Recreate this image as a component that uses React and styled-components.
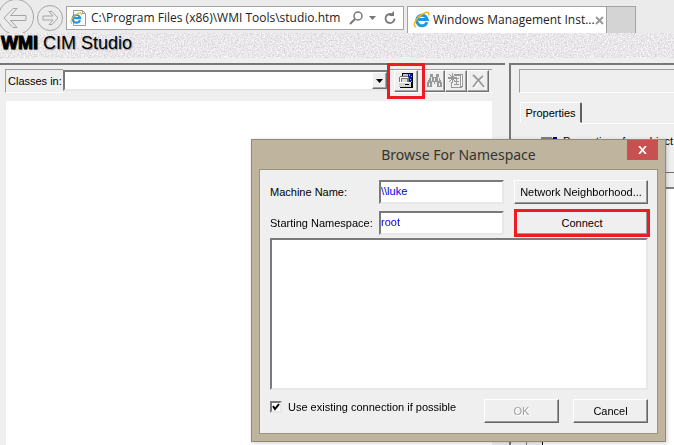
import React from "react";
import styled, { createGlobalStyle, css } from "styled-components";

const Global = createGlobalStyle`
  *, *::before, *::after { box-sizing: border-box; }
  html, body { margin: 0; height: 100%; overflow: hidden; }
  body { background: #efefef; color: #000; font: 11px/14px "Liberation Sans", Arial, sans-serif; }
  button, input { font: inherit; margin: 0; padding: 0; }
  svg { flex: none; }
`;

const sunken = css`
  border: 1px solid;
  border-color: #9d9d9d #fff #fff #9d9d9d;
`;
const field = css`
  background: #fff;
  border: 2px solid;
  border-color: #7a7a7a #e8e8e8 #e8e8e8 #7a7a7a;
  border-radius: 0;
`;

const Page = styled.div`
  position: relative;
  height: 100vh;
  display: flex;
  flex-direction: column;
  overflow: hidden;
`;

const BrowserBar = styled.header`
  display: flex;
  align-items: flex-end;
  height: 33px;
  background: #ebebeb;
  font: 12px/16px "Open Sans", "Noto Sans", sans-serif;
  color: #222;
`;
const NavButtons = styled.nav`
  display: flex;
  align-items: center;
  width: 66px;
  height: 33px;
  overflow: hidden;
`;
const PlainButton = styled.button`
  display: flex;
  flex: none;
  border: 0;
  background: none;
`;
const Address = styled.form`
  display: flex;
  align-items: center;
  width: 338px;
  height: 24px;
  margin-bottom: 3px;
  padding: 0 6px 0 3px;
  gap: 2px;
  background: #fff;
  border: 1px solid #a3a3a3;
`;
const AddressInput = styled.input`
  flex: 1;
  min-width: 0;
  border: 0;
  outline: 0;
  background: none;
  color: #222;
  padding-left: 2px;
`;
const Tab = styled.div`
  display: flex;
  align-items: center;
  width: 200px;
  height: 27px;
  margin-left: 3px;
  padding: 0 5px;
  background: #fff;
  border: 1px solid #a3a3a3;
  border-bottom: 0;
`;
const TabTitle = styled.span`
  flex: 1;
  padding-left: 2px;
  white-space: nowrap;
`;
const NewTab = styled.button`
  width: 29px;
  height: 27px;
  background: #d4d4d4;
  border: 1px solid #a3a3a3;
  border-width: 1px 1px 0 0;
`;

const Banner = styled.div`
  display: grid;
  flex: none;
  height: 25px;
  background: #eae8ea;
  overflow: hidden;
  > * { grid-area: 1 / 1; }
`;
const Title = styled.h1`
  margin: 0;
  padding-left: 1px;
  font: 18px/21px "Liberation Sans", Arial, sans-serif;
  text-shadow: 1px 1px 1px #999;
  b { -webkit-text-stroke: 1px #000; }
`;

const Panes = styled.main`
  display: grid;
  grid-template-columns: 505px 1fr;
  gap: 4px;
  flex: 1;
  min-height: 0;
  padding-top: 5px;
`;
const LeftPane = styled.section`
  display: flex;
  flex-direction: column;
  border-top: 2px solid #777;
  padding: 4px 13px 0 6px;
`;
const Toolbar = styled.div`
  display: flex;
  height: 24px;
  margin-left: -1px;
`;
const ClassesLabel = styled.label`
  ${sunken}
  border-right: 0;
  flex: none;
  width: 58px;
  padding-left: 2px;
  line-height: 22px;
  white-space: nowrap;
`;
const Combo = styled.div`
  ${field}
  display: flex;
  flex: none;
  width: 326px;
  height: 21px;
  margin-top: 1px;
`;
const ComboInput = styled.input`
  flex: 1;
  min-width: 0;
  border: 0;
  outline: 0;
`;
const raised = css`
  background: #efefef;
  border: 1px solid;
  border-color: #fff #707070 #707070 #fff;
  box-shadow: inset -1px -1px #a8a8a8;
`;
const ComboButton = styled.button`
  ${raised}
  display: grid;
  place-items: center;
  width: 15px;
`;
const Tools = styled.div`
  ${sunken}
  flex: 1;
  display: flex;
  padding-left: 5px;
  border-left: 0;
  border-right: 0;
`;
const ToolButton = styled.button`
  ${raised}
  display: grid;
  flex: none;
  place-items: center;
  width: ${(p) => (p.$marked ? 24 : 22)}px;
  height: 22px;
  margin-right: ${(p) => (p.$marked ? 5 : 0)}px;
  outline: ${(p) => (p.$marked ? "3px solid #ed1c24" : "none")};
  outline-offset: 4px;
  z-index: ${(p) => (p.$marked ? 1 : 0)};
`;
const ClassTree = styled.div`
  flex: 1;
  margin-top: 8px;
  background: #fff;
`;

const RightPane = styled.section`
  border: solid #777;
  border-width: 2px 0 0 2px;
  display: flex;
  flex-direction: column;
  min-width: 0;
`;
const PathBox = styled.div`
  ${sunken}
  border-right: 0;
  height: 24px;
  margin: 4px 0 0 8px;
`;
const PropTabs = styled.div`
  display: flex;
  margin: 9px 0 0 9px;
`;
const PropTab = styled.button`
  width: 62px;
  height: 21px;
  background: #efefef;
  border: 1px solid;
  border-color: #fff #606060 transparent #fff;
  border-right-width: 2px;
  border-radius: 2px 2px 0 0;
`;
const PropPanel = styled.div`
  margin-left: 9px;
  height: 50px;
  padding: 11px 0 0 19px;
  border-bottom: 1px solid #707070;
  display: flex;
  gap: 4px;
  align-items: flex-start;
  white-space: nowrap;
  position: relative;
  &::before {
    content: "";
    position: absolute;
    inset: 0 0 auto 61px;
    border-top: 1px solid #fff;
  }
`;
const PropGrid = styled.div`
  flex: 1;
  margin: 14px 0 0 15px;
  background: #fff;
  border: solid #808080;
  border-width: 2px 0 0 1px;
`;
const RowMarkers = styled.div`
  width: 16px;
  height: 100%;
  background: #efefef;
  border-right: 1px solid #000;
`;

const Dialog = styled.section`
  position: absolute;
  left: 251px;
  top: 139px;
  width: 415px;
  padding: 0 7px 7px;
  background: #bfb59f;
  border: 1px solid #948a74;
  box-shadow: 1px 1px 4px #0003;
`;
const DialogHead = styled.header`
  display: grid;
  grid-template-columns: 31px 1fr 31px;
  height: 29px;
  font: 14px/30px "Noto Sans", "Open Sans", sans-serif;
  color: #333;
`;
const DialogTitle = styled.h2`
  grid-column: 2;
  margin: 0;
  font: inherit;
  text-align: center;
`;
const CloseButton = styled.button`
  display: grid;
  place-items: center;
  height: 20px;
  background: #c75050;
  border: 0;
`;
const DialogBody = styled.form`
  padding: 10px 9px 10px 10px;
  background: #efefef;
  border: 1px solid #9d937d;
`;
const FieldRow = styled.div`
  display: grid;
  grid-template-columns: 109px 125px 1fr;
  align-items: start;
  height: 31px;
  & + & { height: 27px; }
`;
const FieldLabel = styled.label`
  line-height: 24px;
`;
const TextInput = styled.input`
  ${field}
  width: 125px;
  height: 24px;
  padding: 0 0 3px 0;
  color: #0000e0;
  outline: 0;
`;
const PushButton = styled.button`
  background: #efefef;
  border: 1px solid;
  border-color: #fff #666 #666 #fff;
  box-shadow: inset -1px -1px #999;
  width: ${(p) => (p.$wide ? "auto" : "75px")};
  height: 24px;
  margin-left: ${(p) => (p.$marked ? 12 : p.$wide ? 10 : 0)}px;
  outline: ${(p) => (p.$marked ? "3px solid #ed1c24" : "none")};
  outline-offset: -1px;
  &:disabled { color: #a0a0a0; text-shadow: 1px 1px #fff; }
`;
const Results = styled.div`
  ${field}
  height: 152px;
  margin-bottom: 9px;
`;
const Footer = styled.div`
  display: flex;
  gap: 14px;
`;
const CheckLabel = styled.label`
  flex: 1;
  display: flex;
  align-items: center;
  gap: 6px;
  height: 16px;
`;
const CheckMark = styled.span`
  display: grid;
  > * { grid-area: 1 / 1; }
  svg { pointer-events: none; }
`;
const Check = styled.input`
  ${field}
  appearance: none;
  width: 12px;
  height: 12px;
  &:not(:checked) + svg { display: none; }
`;

const LogoShape = () => (
  <>
    <path d="M14 11.200A5.300 5.300 0 1 1 14.200 8.600H5.500" stroke="#2496dc" strokeWidth="3" />
    <path d="M3 16C-1 15 2.500 7.500 8 4c5-3.500 9-4 7.500.500" stroke="#f2b91d" strokeWidth="1.500" />
  </>
);
const IELogo = () => (
  <svg width="18" height="18" viewBox="0 0 18 18" fill="none" aria-hidden="true">
    <LogoShape />
  </svg>
);

export default function App() {
  return (
    <Page>
      <Global />
      <BrowserBar>
        <NavButtons>
          <PlainButton type="button" aria-label="Back">
            <svg width="35" height="34" viewBox="0 0 35 34" fill="none" stroke="#a5a5a5">
              <circle cx="16" cy="17" r="17.500" />
              <path d="M4 18 13 8.500h4L10.500 15.500H26v5H10.500L17 27.500h-4Z" />
            </svg>
          </PlainButton>
          <PlainButton type="button" aria-label="Forward">
            <svg width="31" height="34" viewBox="0 0 31 34" fill="none" stroke="#a5a5a5">
              <circle cx="15" cy="18" r="12.500" />
              <path d="M23 18 17 11.500h-3L18 16H8v4h10l-4 4.500h3Z" />
            </svg>
          </PlainButton>
        </NavButtons>
        <Address>
          <svg width="17" height="18" viewBox="0 0 17 18" fill="none" aria-hidden="true">
            <path d="M3.500 1.500h9l3 3v12h-12Z" stroke="#999" fill="#fff" />
            <path d="M12.500 1.500v3h3" stroke="#999" />
            <g transform="translate(0 3) scale(.72)">
              <LogoShape />
            </g>
          </svg>
          <AddressInput aria-label="Address" defaultValue="C:\Program Files (x86)\WMI Tools\studio.htm" />
          <PlainButton type="button" aria-label="Search">
            <svg width="28" height="16" viewBox="0 0 28 16" fill="none" stroke="#777" strokeWidth="1.500">
              <circle cx="9" cy="6" r="4" />
              <path d="m6 9-5 5" strokeWidth="2" />
              <path d="M20 6h7l-3.500 4Z" fill="#777" stroke="none" />
            </svg>
          </PlainButton>
          <PlainButton type="button" aria-label="Refresh">
            <svg width="18" height="16" viewBox="-4 0 18 16" fill="none" stroke="#777" strokeWidth="1.800">
              <path d="M11.500 8.500A4.500 4.500 0 1 1 9 4.500" />
              <path d="M11 1v5H6Z" fill="#777" stroke="none" />
            </svg>
          </PlainButton>
        </Address>
        <Tab>
          <IELogo />
          <TabTitle>Windows Management Inst...</TabTitle>
          <PlainButton type="button" aria-label="Close tab">
            <svg width="9" height="9" viewBox="0 0 9 9" stroke="#999" strokeWidth="2">
              <path d="m1 1 7 7M8 1 1 8" />
            </svg>
          </PlainButton>
        </Tab>
        <NewTab type="button" aria-label="New tab" />
      </BrowserBar>

      <Banner>
        <svg width="100%" height="25" aria-hidden="true">
          <filter id="grain" x="0" y="0" width="100%" height="100%" colorInterpolationFilters="sRGB">
            <feTurbulence type="fractalNoise" baseFrequency="0.7" numOctaves="2" seed="4" />
            <feColorMatrix values=".3 .06 0 0 .735  .3 .03 0 0 .74  .3 .06 0 0 .735  0 0 0 0 1" />
          </filter>
          <rect width="100%" height="25" filter="url(#grain)" />
        </svg>
        <Title><b>WMI</b> CIM Studio</Title>
      </Banner>

      <Panes>
        <LeftPane>
          <Toolbar>
            <ClassesLabel htmlFor="classes">Classes in:</ClassesLabel>
            <Combo>
              <ComboInput id="classes" />
              <ComboButton type="button" aria-label="Show namespaces">
                <svg width="7" height="4"><path d="M0 0h7L3.500 4Z" /></svg>
              </ComboButton>
            </Combo>
            <Tools>
              <ToolButton type="button" aria-label="Browse for namespace" $marked>
                <svg width="16" height="16" viewBox="0 0 16 16" shapeRendering="crispEdges">
                  <path d="M4 0h11v12H4z" fill="#000" />
                  <path d="M5 1h9v10H5z" fill="#c0c0c0" />
                  <path d="M10 1h4v8h-4z" fill="#0018c8" />
                  <path d="M11 1h1v2h-1zM10 4h1v1h-1zM13 3h1v1h-1zM12 6h1v1h-1zM13 8h1v1h-1z" fill="#5cf" />
                  <path d="M2 3h8v1h1v6H1V4h1z" fill="#777" />
                  <path d="M2 4h8v1H2zM2 5h1v4H2z" fill="#fff" />
                  <path d="M4 6h5v3H4z" fill="#dcdcdc" />
                  <path d="M1 9h13l1 1v5H2l-1-1z" fill="#000" />
                  <path d="M1 9h12v5H1z" fill="#d4d4d4" />
                  <path d="M1 9h12v1H1z" fill="#fff" />
                  <path d="M7 11h4v1H7z" fill="#000" />
                </svg>
              </ToolButton>
              <ToolButton type="button" aria-label="Search for class" disabled>
                <svg width="17" height="16" viewBox="0 0 17 16" fill="#999" shapeRendering="crispEdges">
                  <path d="M4 1h3v3h3V1h3v3l3 6v4h-5V9H9v2H8V9H6v5H1v-4l3-6Z" />
                  <path d="M3 10v3M5 4v4M13 10v3M12 4v4M8 5v3" stroke="#eee" />
                </svg>
              </ToolButton>
              <ToolButton type="button" aria-label="Add class" disabled>
                <svg width="16" height="16" viewBox="0 0 16 16" fill="#999" shapeRendering="crispEdges">
                  <path d="M6 1h9v12l-2 2H3V9h1v5h8V3H6z" />
                  <path d="M13 2h1v11h-1z" fill="#fff" />
                  <path d="M6 5h5v1H6zM6 8h5v1H6zM6 11h5v1H6zM8 5h1v7H8z" />
                  <path d="M4 0h1v10H4zM0 4h9v2H0zM1 1h1v1H1zM2 2h1v1H2zM3 3h1v1H3zM7 1h1v1H7zM6 2h1v1H6zM5 3h1v1H5zM3 6h1v1H3zM2 7h1v1H2zM1 8h1v1H1zM5 6h1v1H5zM6 7h1v1H6z" />
                </svg>
              </ToolButton>
              <ToolButton type="button" aria-label="Delete class" disabled>
                <svg width="15" height="15" viewBox="0 0 15 15" fill="none">
                  <path d="M3 2c4 3 7 7 11 12M13 3C9 6 6 9 3 14" stroke="#fff" strokeWidth="1.500" />
                  <path d="M2 1c4 3 7 7 11 12M12 2C8 5 5 8 2 13" stroke="#999" strokeWidth="1.800" />
                </svg>
              </ToolButton>
            </Tools>
          </Toolbar>
          <ClassTree />
        </LeftPane>
        <RightPane>
          <PathBox />
          <PropTabs>
            <PropTab type="button">Properties</PropTab>
          </PropTabs>
          <PropPanel>
            <svg width="20" height="14" viewBox="0 0 20 14" aria-hidden="true">
              <path d="M2 3h11v1h1v8H0V5h2z" fill="#808080" />
              <path d="M14 3h4v9h-4z" fill="#000080" />
            </svg>
            Properties of an object
          </PropPanel>
          <PropGrid><RowMarkers /></PropGrid>
        </RightPane>
      </Panes>

      <Dialog role="dialog" aria-labelledby="dialog-title">
        <DialogHead>
          <DialogTitle id="dialog-title">Browse For Namespace</DialogTitle>
          <CloseButton type="button" aria-label="Close">
            <svg width="9" height="8" viewBox="0 0 9 8" stroke="#fff" strokeWidth="1.800">
              <path d="m1 0 7 8M8 0 1 8" />
            </svg>
          </CloseButton>
        </DialogHead>
        <DialogBody>
          <FieldRow>
            <FieldLabel htmlFor="machine">Machine Name:</FieldLabel>
            <TextInput
              id="machine"
              defaultValue="\\luke"
              autoFocus
              onFocus={(e) => e.target.setSelectionRange(6, 6)}
            />
            <PushButton type="button" $wide>Network Neighborhood...</PushButton>
          </FieldRow>
          <FieldRow>
            <FieldLabel htmlFor="namespace">Starting Namespace:</FieldLabel>
            <TextInput id="namespace" defaultValue="root" />
            <PushButton type="button" $wide $marked>Connect</PushButton>
          </FieldRow>
          <Results />
          <Footer>
            <CheckLabel>
              <CheckMark>
                <Check type="checkbox" defaultChecked />
                <svg width="12" height="12" viewBox="0 0 12 12" fill="none" stroke="#000" strokeWidth="2">
                  <path d="m3 5 2 3 4-5" />
                </svg>
              </CheckMark>
              Use existing connection if possible
            </CheckLabel>
            <PushButton type="button" disabled>OK</PushButton>
            <PushButton type="button">Cancel</PushButton>
          </Footer>
        </DialogBody>
      </Dialog>
    </Page>
  );
}
